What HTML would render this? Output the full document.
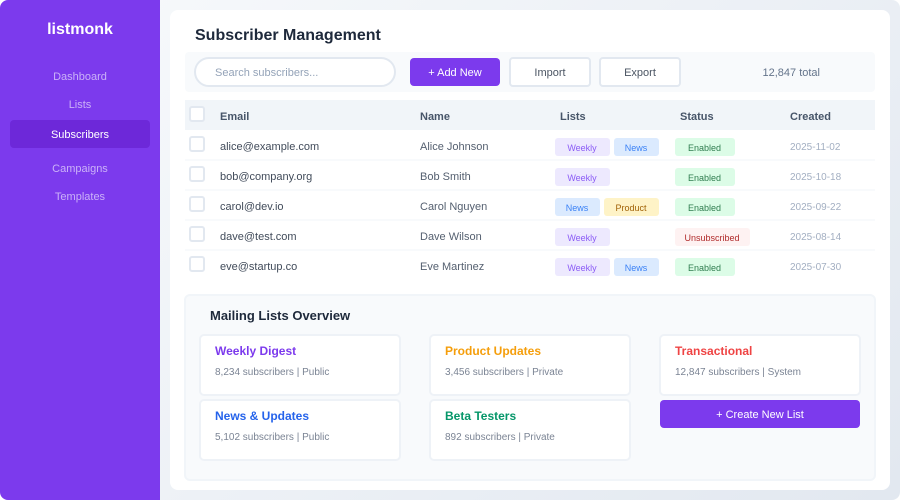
<!DOCTYPE html>
<html><head><meta charset="utf-8"><title>listmonk</title>
<style>
html,body{margin:0;padding:0;width:900px;height:500px;background:#fff;overflow:hidden}
body{font-family:"Liberation Sans",sans-serif;position:relative}
#app{position:absolute;left:0;top:0;width:900px;height:500px;border-radius:8px;overflow:hidden;background:linear-gradient(135deg,#f8fafc 0%,#e2e8f0 100%)}
#app div,#app span.a{position:absolute;box-sizing:border-box}
.t{white-space:nowrap;line-height:14px;height:14px}
.side{left:0;top:0;width:160px;height:500px;background:#7c3aed}
.nav{left:0;width:160px;text-align:center;font-size:11px;color:rgba(255,255,255,.6)}
.cb{left:189px;width:16px;height:16px;border:2px solid #e2e8f0;border-radius:3px;background:#fff}
.sep{left:185px;width:690px;height:2px;background:#f8fafc}
.em{left:220px;font-size:11px;color:#414b5a}
.nm{left:420px;font-size:11px;color:#556070}
.th{font-size:11px;font-weight:bold;color:#475569}
.dt{left:790px;font-size:10px;color:#a3afc2}
.tag{height:18px;border-radius:3px;font-size:9px;line-height:20px;text-align:center;white-space:nowrap;padding-right:1px}
.w{background:#ede9fe;color:#8b5cf6}
.n{background:#dbeafe;color:#3b82f6}
.p{background:#fef3c7;color:#a16207}
.e{background:#dcfce7;color:#2f7d4f}
.u{background:#fef2f2;color:#b02a2a}
.btn{top:57px;height:30px;width:82px;background:#fff;border:2px solid #e2e8f0;border-radius:4px;font-size:11px;color:#4b5563;text-align:center;line-height:28px}
.card{width:202px;height:62px;background:#fff;border:2px solid #eef2f7;border-radius:5px}
.ct{font-size:12px;font-weight:bold}
.cm{font-size:10px;color:#7b8494}
</style></head><body>
<div id="app">
<div class="side"></div>
<div class="t" style="left:0;top:22px;width:160px;height:16px;line-height:16px;text-align:center;font-size:16px;font-weight:bold;color:#fff">listmonk</div>
<div class="t nav" style="top:70px">Dashboard</div>
<div class="t nav" style="top:98px">Lists</div>
<div style="left:10px;top:120px;width:140px;height:28px;background:#6d28d9;border-radius:4px"></div>
<div class="t nav" style="top:128px;color:#fff">Subscribers</div>
<div class="t nav" style="top:162px">Campaigns</div>
<div class="t nav" style="top:190px">Templates</div>

<div style="left:170px;top:10px;width:720px;height:480px;background:#fff;border-radius:8px"></div>
<div class="t" style="left:195px;top:27px;height:18px;line-height:18px;font-size:16px;font-weight:bold;color:#1e293b">Subscriber Management</div>

<div style="left:185px;top:52px;width:690px;height:40px;background:#f8fafc;border-radius:4px"></div>
<div style="left:194px;top:57px;width:202px;height:30px;background:#fff;border:2px solid #e2e8f0;border-radius:15px"></div>
<div class="t" style="left:215px;top:66px;font-size:11px;color:#94a3b8">Search subscribers...</div>
<div style="left:410px;top:58px;width:90px;height:28px;background:#7c3aed;border-radius:4px;color:#fff;font-size:11px;text-align:center;line-height:30px">+ Add New</div>
<div class="btn" style="left:509px">Import</div>
<div class="btn" style="left:599px">Export</div>
<div class="t" style="left:762.5px;top:66px;font-size:11px;color:#64748b">12,847 total</div>

<div style="left:185px;top:100px;width:690px;height:30px;background:#f1f5f9"></div>
<div class="cb" style="top:106px"></div>
<div class="t th" style="left:220px;top:110px">Email</div>
<div class="t th" style="left:420px;top:110px">Name</div>
<div class="t th" style="left:560px;top:110px">Lists</div>
<div class="t th" style="left:680px;top:110px">Status</div>
<div class="t th" style="left:790px;top:110px">Created</div>

<div class="sep" style="top:159px"></div>
<div class="sep" style="top:189px"></div>
<div class="sep" style="top:219px"></div>
<div class="sep" style="top:249px"></div>

<div class="cb" style="top:136px"></div>
<div class="t em" style="top:140px">alice@example.com</div>
<div class="t nm" style="top:140px">Alice Johnson</div>
<div class="tag w" style="left:555px;top:138px;width:55px">Weekly</div>
<div class="tag n" style="left:614px;top:138px;width:45px">News</div>
<div class="tag e" style="left:675px;top:138px;width:60px">Enabled</div>
<div class="t dt" style="top:141px">2025-11-02</div>

<div class="cb" style="top:166px"></div>
<div class="t em" style="top:170px">bob@company.org</div>
<div class="t nm" style="top:170px">Bob Smith</div>
<div class="tag w" style="left:555px;top:168px;width:55px">Weekly</div>
<div class="tag e" style="left:675px;top:168px;width:60px">Enabled</div>
<div class="t dt" style="top:171px">2025-10-18</div>

<div class="cb" style="top:196px"></div>
<div class="t em" style="top:200px">carol@dev.io</div>
<div class="t nm" style="top:200px">Carol Nguyen</div>
<div class="tag n" style="left:555px;top:198px;width:45px">News</div>
<div class="tag p" style="left:604px;top:198px;width:55px">Product</div>
<div class="tag e" style="left:675px;top:198px;width:60px">Enabled</div>
<div class="t dt" style="top:201px">2025-09-22</div>

<div class="cb" style="top:226px"></div>
<div class="t em" style="top:230px">dave@test.com</div>
<div class="t nm" style="top:230px">Dave Wilson</div>
<div class="tag w" style="left:555px;top:228px;width:55px">Weekly</div>
<div class="tag u" style="left:675px;top:228px;width:75px">Unsubscribed</div>
<div class="t dt" style="top:231px">2025-08-14</div>

<div class="cb" style="top:256px"></div>
<div class="t em" style="top:260px">eve@startup.co</div>
<div class="t nm" style="top:260px">Eve Martinez</div>
<div class="tag w" style="left:555px;top:258px;width:55px">Weekly</div>
<div class="tag n" style="left:614px;top:258px;width:45px">News</div>
<div class="tag e" style="left:675px;top:258px;width:60px">Enabled</div>
<div class="t dt" style="top:261px">2025-07-30</div>

<div style="left:184px;top:294px;width:692px;height:187px;background:#f8fafc;border:2px solid #f1f5f9;border-radius:6px"></div>
<div class="t" style="left:210px;top:308px;height:15px;line-height:15px;font-size:13px;font-weight:bold;color:#1e293b">Mailing Lists Overview</div>

<div class="card" style="left:199px;top:334px"></div>
<div class="t ct" style="left:215px;top:344px;color:#7c3aed">Weekly Digest</div>
<div class="t cm" style="left:215px;top:366px">8,234 subscribers | Public</div>

<div class="card" style="left:429px;top:334px"></div>
<div class="t ct" style="left:445px;top:344px;color:#f59e0b">Product Updates</div>
<div class="t cm" style="left:445px;top:366px">3,456 subscribers | Private</div>

<div class="card" style="left:659px;top:334px"></div>
<div class="t ct" style="left:675px;top:344px;color:#ef4444">Transactional</div>
<div class="t cm" style="left:675px;top:366px">12,847 subscribers | System</div>

<div class="card" style="left:199px;top:399px"></div>
<div class="t ct" style="left:215px;top:409px;color:#2563eb">News &amp; Updates</div>
<div class="t cm" style="left:215px;top:431px">5,102 subscribers | Public</div>

<div class="card" style="left:429px;top:399px"></div>
<div class="t ct" style="left:445px;top:409px;color:#059669">Beta Testers</div>
<div class="t cm" style="left:445px;top:431px">892 subscribers | Private</div>

<div style="left:660px;top:400px;width:200px;height:28px;background:#7c3aed;border-radius:4px;color:#fff;font-size:11px;text-align:center;line-height:31px">+ Create New List</div>
</div>
</body></html>
